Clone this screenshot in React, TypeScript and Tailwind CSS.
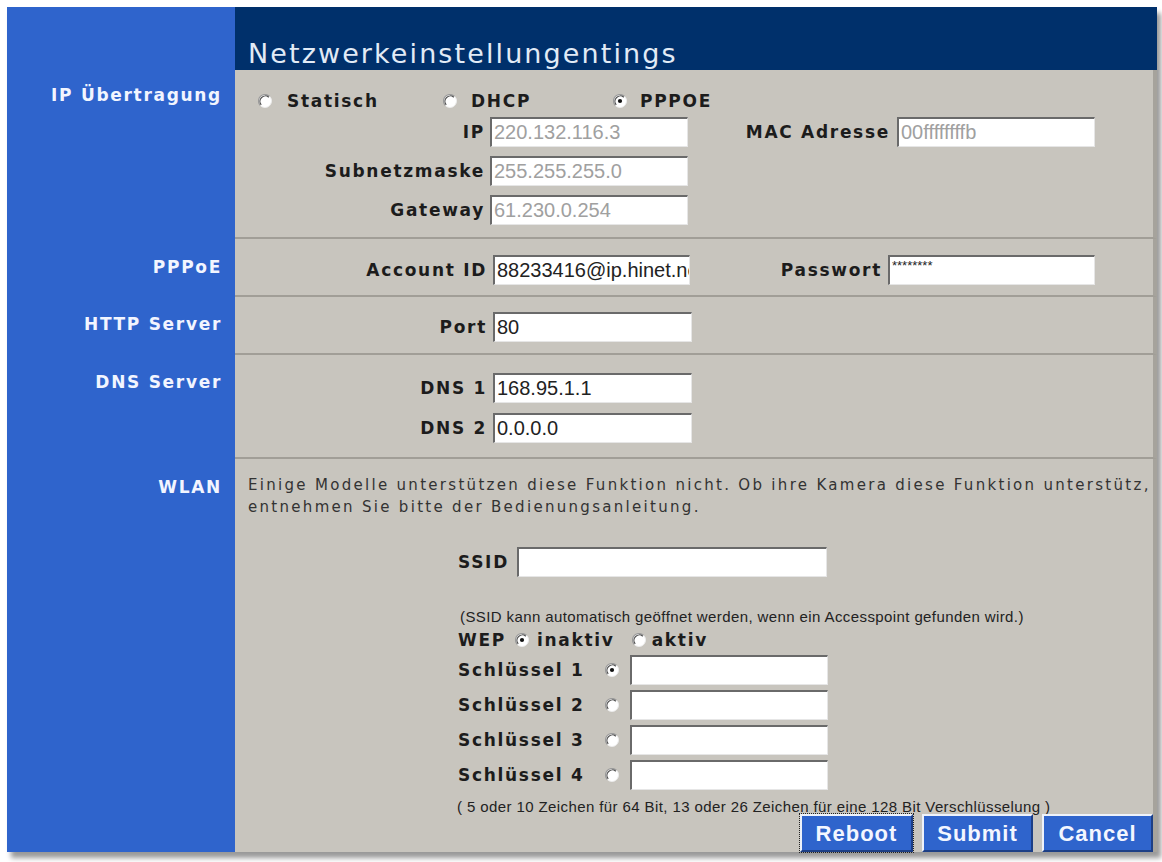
import React from "react";

const bold = "font-['DejaVu_Sans',Verdana,sans-serif] font-bold text-[17px] tracking-[1.7px] text-[#1c1c1c] leading-[20px]";
const side = "font-['DejaVu_Sans',Verdana,sans-serif] font-bold text-[17px] tracking-[1.7px] text-[#f2f5ff] leading-[20px]";

function Radio({ checked = false }: { checked?: boolean }) {
  return (
    <svg width="14" height="14" viewBox="0 0 14 14" className="shrink-0">
      <circle cx="7" cy="7" r="6.5" fill="#ffffff" />
      <path d="M2.4 11.6 A6.5 6.5 0 0 1 11.6 2.4" fill="none" stroke="#9a9a9a" strokeWidth="1.2" />
      <path d="M3.2 10.8 A5.4 5.4 0 0 1 10.8 3.2" fill="none" stroke="#4a4a4a" strokeWidth="1.2" />
      <path d="M11.6 2.4 A6.5 6.5 0 0 1 2.4 11.6" fill="none" stroke="#ececec" strokeWidth="1" />
      {checked && <circle cx="7" cy="7" r="2.1" fill="#111111" />}
    </svg>
  );
}

function Field({
  value = "",
  w,
  dim = false,
  small = false,
  className = "",
}: {
  value?: string;
  w: string;
  dim?: boolean;
  small?: boolean;
  className?: string;
}) {
  return (
    <input
      readOnly
      value={value}
      className={`h-[30px] ${w} ${className} bg-white border-t-2 border-l-2 border-r border-b border-t-[#6a6a6a] border-l-[#6a6a6a] border-r-[#e6e6e6] border-b-[#e6e6e6] pl-[2px] font-['Liberation_Sans',Arial,sans-serif] ${small ? "text-[13px] pb-[10px]" : "text-[20px]"} leading-none outline-none ${dim ? "text-[#a0a0a0]" : "text-[#222222]"}`}
    />
  );
}

function Row({ label, h, lp, last = false, children }: { label: string; h: string; lp: string; last?: boolean; children: React.ReactNode }) {
  return (
    <div className={`flex ${h}`}>
      <div className={`w-[228px] shrink-0 bg-[#2f64cc] pr-[13px] text-right ${lp}`}>
        <span className={side}>{label}</span>
      </div>
      <div className={`flex-1 bg-[#c8c5be] border-r-4 border-r-[#a6a39c] ${last ? "" : "border-b-2 border-b-[#a19e97]"}`}>
        {children}
      </div>
    </div>
  );
}

function Button({ label, w, focus = false }: { label: string; w: string; focus?: boolean }) {
  return (
    <button
      className={`h-[38px] ${w} bg-[#2f64cc] border-t-2 border-l-2 border-r-2 border-b-2 border-t-[#eef2fa] border-l-[#eef2fa] border-r-[#1d3f86] border-b-[#1d3f86] font-['Liberation_Sans',Arial,sans-serif] font-bold text-[22px] tracking-[1px] text-[#f3f6ff] ${focus ? "outline-1 outline-dotted outline-[#222]" : ""}`}
    >
      {label}
    </button>
  );
}

export default function App() {
  return (
    <div className="min-h-screen bg-white pt-[7px] pl-[7px]">
      <div className="flex w-[1150px] flex-col shadow-[4px_6px_5px_rgba(0,0,0,0.4)]">
        <div className="flex h-[63px]">
          <div className="w-[228px] bg-[#2f64cc]" />
          <div className="flex flex-1 items-end bg-[#00306b] pl-[13px]">
            <h1 className="font-['DejaVu_Sans',Verdana,sans-serif] text-[27px] leading-[32px] tracking-[2.1px] text-[#e2ebf6]">
              Netzwerkeinstellungentings
            </h1>
          </div>
        </div>

        <Row label="IP Übertragung" h="h-[169px]" lp="pt-[13px]">
          <div className="pt-[22px]">
            <div className="flex h-[18px] items-center pl-[23px]">
              <div className="flex w-[185px] items-center">
                <Radio />
                <span className={`ml-[15px] ${bold}`}>Statisch</span>
              </div>
              <div className="flex w-[170px] items-center">
                <Radio />
                <span className={`ml-[14px] ${bold}`}>DHCP</span>
              </div>
              <div className="flex items-center">
                <Radio checked />
                <span className={`ml-[13px] ${bold}`}>PPPOE</span>
              </div>
            </div>
            <div className="mt-[7px] flex flex-col gap-[9px]">
              <div className="flex items-center">
                <span className={`w-[250px] text-right ${bold}`}>IP</span>
                <Field className="ml-[5px]" w="w-[198px]" dim value="220.132.116.3" />
                <span className={`w-[202px] text-right ${bold}`}>MAC Adresse</span>
                <Field className="ml-[7px]" w="w-[198px]" dim value="00ffffffffb" />
              </div>
              <div className="flex items-center">
                <span className={`w-[250px] text-right ${bold}`}>Subnetzmaske</span>
                <Field className="ml-[5px]" w="w-[198px]" dim value="255.255.255.0" />
              </div>
              <div className="flex items-center">
                <span className={`w-[250px] text-right ${bold}`}>Gateway</span>
                <Field className="ml-[5px]" w="w-[198px]" dim value="61.230.0.254" />
              </div>
            </div>
          </div>
        </Row>

        <Row label="PPPoE" h="h-[58px]" lp="pt-[16px]">
          <div className="flex items-center pt-[16px]">
            <span className={`w-[252px] text-right ${bold}`}>Account ID</span>
            <Field className="ml-[6px]" w="w-[197px]" value="88233416@ip.hinet.net" />
            <span className={`w-[192px] text-right ${bold}`}>Passwort</span>
            <Field className="ml-[6px]" w="w-[207px]" small value="********" />
          </div>
        </Row>

        <Row label="HTTP Server" h="h-[58px]" lp="pt-[15px]">
          <div className="flex items-center pt-[15px]">
            <span className={`w-[252px] text-right ${bold}`}>Port</span>
            <Field className="ml-[6px]" w="w-[199px]" value="80" />
          </div>
        </Row>

        <Row label="DNS Server" h="h-[104px]" lp="pt-[15px]">
          <div className="flex flex-col gap-[10px] pt-[18px]">
            <div className="flex items-center">
              <span className={`w-[252px] text-right ${bold}`}>DNS 1</span>
              <Field className="ml-[6px]" w="w-[199px]" value="168.95.1.1" />
            </div>
            <div className="flex items-center">
              <span className={`w-[252px] text-right ${bold}`}>DNS 2</span>
              <Field className="ml-[6px]" w="w-[199px]" value="0.0.0.0" />
            </div>
          </div>
        </Row>

        <Row label="WLAN" h="h-[393px]" lp="pt-[16px]" last>
          <div className="flex h-full flex-col">
            <p className="whitespace-nowrap pl-[13px] pt-[15px] font-['DejaVu_Sans',Verdana,sans-serif] text-[15px] leading-[22px] tracking-[2.3px] text-[#333333]">
              Einige Modelle unterstützen diese Funktion nicht. Ob ihre Kamera diese Funktion unterstütz,
              <br />
              entnehmen Sie bitte der Bedienungsanleitung.
            </p>
            <div className="mt-[29px] flex items-center pl-[223px]">
              <span className={`w-[59px] ${bold}`}>SSID</span>
              <Field w="w-[310px]" />
            </div>
            <p className="mt-[31px] whitespace-nowrap pl-[225px] font-['Liberation_Sans',Arial,sans-serif] text-[15px] leading-[18px] tracking-[0.4px] text-[#222222]">
              (SSID kann automatisch geöffnet werden, wenn ein Accesspoint gefunden wird.)
            </p>
            <div className="mt-[4px] flex h-[20px] items-center pl-[223px]">
              <span className={`w-[57px] ${bold}`}>WEP</span>
              <Radio checked />
              <span className={`ml-[8px] ${bold}`}>inaktiv</span>
              <span className="ml-[17px] flex">
                <Radio />
              </span>
              <span className={`ml-[6px] ${bold}`}>aktiv</span>
            </div>
            <div className="mt-[5px] flex flex-col gap-[5px] pl-[223px]">
              {[1, 2, 3, 4].map((n) => (
                <div key={n} className="flex items-center">
                  <span className={`w-[147px] ${bold}`}>Schlüssel {n}</span>
                  <Radio checked={n === 1} />
                  <Field className="ml-[11px]" w="w-[198px]" />
                </div>
              ))}
            </div>
            <p className="mt-[9px] whitespace-nowrap pl-[222px] font-['Liberation_Sans',Arial,sans-serif] text-[15px] leading-[15px] tracking-[0.4px] text-[#222222]">
              ( 5 oder 10 Zeichen für 64 Bit, 13 oder 26 Zeichen für eine 128 Bit Verschlüsselung )
            </p>
            <div className="mt-auto flex justify-end gap-[9px]">
              <Button label="Reboot" w="w-[113px]" focus />
              <Button label="Submit" w="w-[111px]" />
              <Button label="Cancel" w="w-[111px]" />
            </div>
          </div>
        </Row>
      </div>
    </div>
  );
}
